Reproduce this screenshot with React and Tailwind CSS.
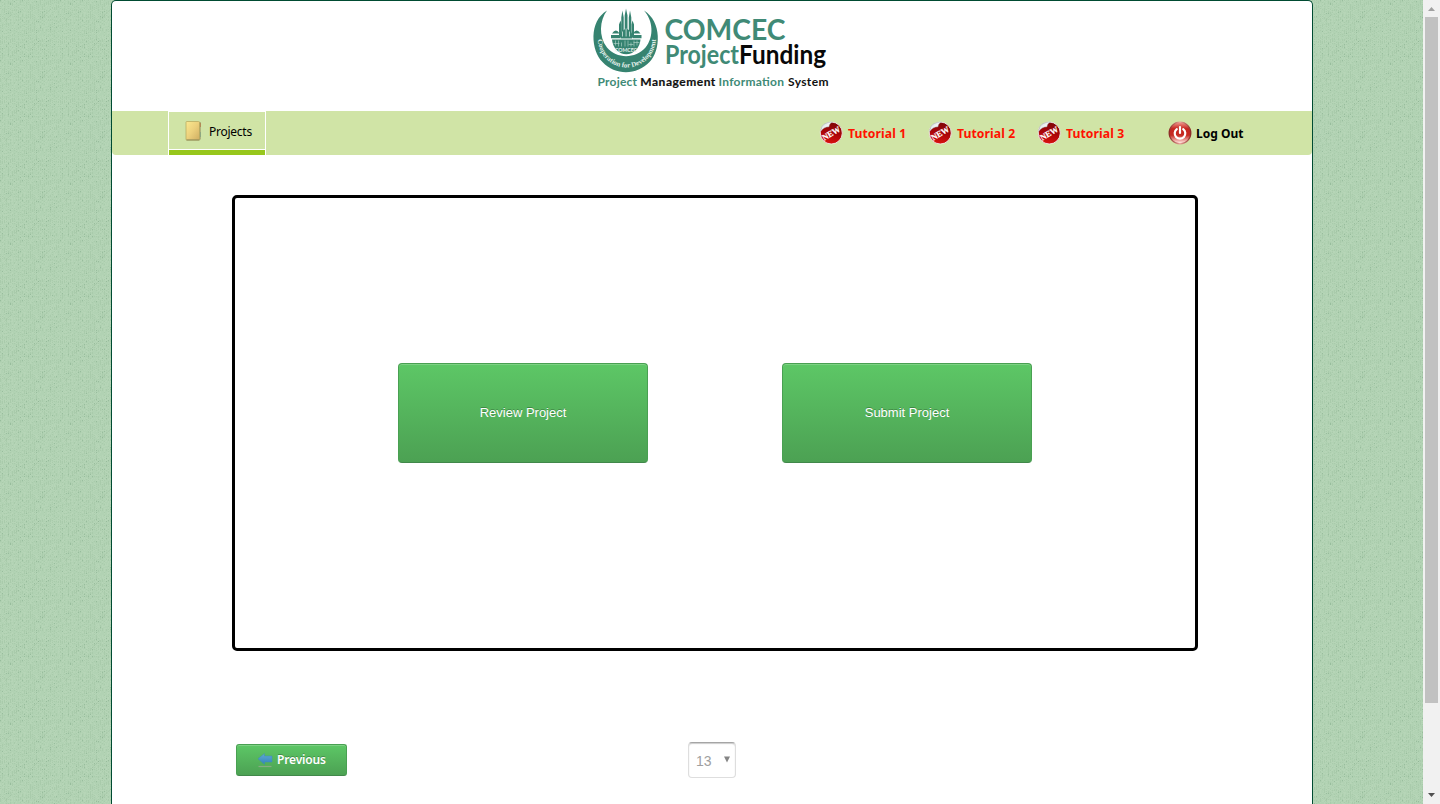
const DARK = [];
const LIGHT = [];
let seed = 17;
const rand = () => {
  seed = (seed * 16807) % 2147483647;
  return seed / 2147483647;
};
for (let y = 0; y < 60; y += 1) {
  for (let x = 0; x < 60; x += 1) {
    const r = rand();
    if (x % 2 === 0 && r < 0.42) DARK.push([x, y, r < 0.03 ? 0.17 : 0.06]);
    else if (r > 0.75) LIGHT.push([x, y]);
  }
}

function Texture() {
  return (
    <svg className="absolute inset-0 h-full w-full" shapeRendering="crispEdges">
      <defs>
        <pattern id="linen" width="60" height="60" patternUnits="userSpaceOnUse">
          <rect width="60" height="60" fill="#b1d2b3" />
          {DARK.map(([x, y, o]) => (
            <rect key={`d${x}-${y}`} x={x} y={y} width="1" height="1" fill="#205030" opacity={o} />
          ))}
          {LIGHT.map(([x, y]) => (
            <rect key={`l${x}-${y}`} x={x} y={y} width="1" height="1" fill="#fff" opacity="0.06" />
          ))}
          <path d="M4 22l8-8M30 50l10-10M42 18l9-9M12 56l6-6" stroke="#205030" strokeOpacity="0.05" />
        </pattern>
      </defs>
      <rect width="100%" height="100%" fill="url(#linen)" />
    </svg>
  );
}

function Logo() {
  return (
    <svg width="250" height="92" viewBox="585 0 250 92" className="block" fontFamily="Lato, sans-serif">
      <defs>
        <path id="motto" d="M597.300 38A29 29 0 0 0 655.300 38" />
        <clipPath id="bowl">
          <path d="M611.500 39H640A14.300 16 0 0 1 611.500 39Z" />
        </clipPath>
      </defs>
      <g transform="translate(0.500 -0.500)">
        <path
          d="M606.500 10C588 21 590.500 50 602 61.500C615 75.500 637 74.500 649 61.500C660.500 50 661.500 21 643.500 10C652.500 20 654 36 645 47C635 58.500 616 58.500 606.500 47C598 36 599 20 606.500 10Z"
          fill="#368370"
        />
        <text fontSize="7" fontWeight="700" fontFamily="Liberation Serif, serif" fill="#e4f1ec">
          <textPath href="#motto" startOffset="1" textLength="89" lengthAdjust="spacingAndGlyphs">
            Cooperation for Development
          </textPath>
        </text>
        <g fill="#368370">
          <path d="M620.800 36V17L621.900 10L623.200 17V36ZM624.200 36V15L625.500 8L627 15V36ZM628.300 36V17L629.500 10L630.800 17V36Z" />
          <path d="M618.500 37V24L620 20L621 24V37ZM631 37V24L632 20L633.500 24V37Z" />
          <path d="M620 33Q625.700 24 631.500 33V38H620Z" />
          <path d="M611.500 33Q615.500 27 619 33ZM632.500 33Q636 27 640 33Z" />
          <path d="M610.500 34.500H619.500V37.800H610.500ZM632 34.500H641V37.800H632Z" />
          <path d="M611.500 39H640A14.300 16 0 0 1 611.500 39Z" />
        </g>
        <g clipPath="url(#bowl)" stroke="#b9d8ce" strokeWidth="0.600" fill="none">
          <path d="M615 40v5M618 40v6M621 42v4M624.500 40v6M627.500 40v6M630.500 42v4M633.500 40v6M636.500 40v5M613 43h6M628 44h5M633 42h6" />
        </g>
        <text x="614.500" y="51.300" fontSize="5.500" fontWeight="700" fill="#e4f1ec" textLength="22" lengthAdjust="spacingAndGlyphs">COMCEC</text>
        <path d="M622 31v5M625.600 28v8M629 31v5" stroke="#d6e9e2" strokeWidth="0.800" />
      </g>
      <text x="664.500" y="39.200" fontSize="28.500" fontWeight="700" fill="#408a76" textLength="121" lengthAdjust="spacingAndGlyphs">COMCEC</text>
      <text x="665" y="62.800" fontSize="26" fontWeight="700" fill="#408a76" textLength="74" lengthAdjust="spacingAndGlyphs">Project</text>
      <text x="739" y="62.800" fontSize="26" fontWeight="700" fill="#080808" textLength="87" lengthAdjust="spacingAndGlyphs">Funding</text>
      <g fontSize="12" fontWeight="700">
        <text x="597.500" y="84.500" fill="#408a76" textLength="39.500">Project</text>
        <text x="640.300" y="84.500" fill="#111" stroke="#111" strokeWidth="0.200" textLength="75">Management</text>
        <text x="718.500" y="84.500" fill="#408a76" textLength="65.500">Information</text>
        <text x="788" y="84.500" fill="#111" textLength="40.500">System</text>
      </g>
    </svg>
  );
}

function FolderIcon() {
  return (
    <svg width="18" height="22" viewBox="0 0 18 22">
      <defs>
        <linearGradient id="folder" x1="0" y1="0" x2="1" y2="1">
          <stop offset="0" stopColor="#fbe98f" />
          <stop offset="0.5" stopColor="#ecd07c" />
          <stop offset="1" stopColor="#cfae62" />
        </linearGradient>
      </defs>
      <path d="M13 2h2.500v17.500H13z" fill="#8c8458" />
      <path d="M15 3v4" stroke="#b5602f" />
      <path d="M15 12v5" stroke="#6f9a83" />
      <rect x="1" y="1.500" width="13.500" height="18.500" rx="0.8" fill="url(#folder)" stroke="#b9ac62" strokeWidth="0.8" />
      <path d="M1.500 20h13" stroke="#8e8958" />
    </svg>
  );
}

function NewIcon() {
  return (
    <svg width="24" height="24" viewBox="0 0 24 24" className="shrink-0 overflow-visible">
      <defs>
        <linearGradient id="sticker" x1="0.6" y1="0" x2="0.4" y2="1">
          <stop offset="0" stopColor="#7d0508" />
          <stop offset="0.5" stopColor="#a90508" />
          <stop offset="1" stopColor="#dc1210" />
        </linearGradient>
        <linearGradient id="peel" x1="0" y1="0" x2="1" y2="1">
          <stop offset="0" stopColor="#c3cdd0" />
          <stop offset="0.6" stopColor="#ffffff" />
          <stop offset="1" stopColor="#aeb9bd" />
        </linearGradient>
      </defs>
      <path d="M3.200 5.500C5.500 3 9 1 12.500 1A11 11 0 1 1 1.300 12C1.200 9.500 1.800 7 3.200 5.500Z" fill="url(#sticker)" stroke="#f2ecec" strokeWidth="0.900" />
      <path d="M1.600 10.500C1.800 8.500 2.500 7 3 5.500L5 3.200C8 1.600 10.500 1 13.500 1C11.300 2 10 3.500 10 5.700C6.500 5.800 3.500 7.500 1.600 10.500Z" fill="url(#peel)" stroke="#a5b0b4" strokeWidth="0.500" />
      <text x="12" y="15.300" fontSize="8.500" fontWeight="700" fontFamily="Liberation Serif, serif" fill="#fff" stroke="#fff" strokeWidth="0.200" textAnchor="middle" textLength="19.500" lengthAdjust="spacingAndGlyphs" transform="rotate(-30 12 12)">NEW</text>
    </svg>
  );
}

function PowerIcon() {
  return (
    <svg width="24" height="24" viewBox="0 0 24 24">
      <defs>
        <linearGradient id="power" x1="0" y1="0" x2="0" y2="1">
          <stop offset="0" stopColor="#f29a90" />
          <stop offset="0.3" stopColor="#c6251f" />
          <stop offset="0.6" stopColor="#c62a22" />
          <stop offset="0.95" stopColor="#ffe0da" />
        </linearGradient>
        <linearGradient id="rim" x1="0" y1="0" x2="1" y2="0">
          <stop offset="0" stopColor="#8c2925" />
          <stop offset="0.5" stopColor="#e9a39a" />
          <stop offset="1" stopColor="#8c2925" />
        </linearGradient>
      </defs>
      <circle cx="12" cy="12" r="10.800" fill="url(#power)" stroke="url(#rim)" strokeWidth="1.300" />
      <path d="M8.800 8.200A5.300 5.300 0 1 0 15.200 8.200M12 6.200V12" fill="none" stroke="#fff" strokeWidth="2.200" strokeLinecap="round" />
    </svg>
  );
}

function ArrowIcon() {
  return (
    <svg width="16" height="16" viewBox="0 0 16 16">
      <defs>
        <linearGradient id="arrow" x1="0" y1="0" x2="0" y2="1">
          <stop offset="0" stopColor="#62a9d2" />
          <stop offset="1" stopColor="#3285bd" />
        </linearGradient>
      </defs>
      <path d="M1 6.800L7.500 1.500V4H15V10H7.500V12.300Z" fill="url(#arrow)" stroke="#3d8cb8" strokeWidth="0.500" />
      <path d="M1.500 14.500H14.500" stroke="#86ab82" strokeWidth="1.200" />
    </svg>
  );
}

const GREEN =
  "border border-[#49a052] border-b-[#41884a] bg-linear-to-b from-[#5dc766] to-[#4ca153] text-white shadow-[inset_0_1px_0_rgba(255,255,255,0.2)] [text-shadow:0_-1px_0_rgba(0,0,0,0.25)]";

function Tutorial({ n }) {
  return (
    <a className="flex w-[109px] items-center gap-[5px] text-[#ff1200]">
      <NewIcon />
      <span className="pt-[2px] tracking-[0.080px] whitespace-nowrap [font-size:12.200px]">Tutorial {n}</span>
    </a>
  );
}

export default function App() {
  return (
    <div className="flex h-[804px] w-[1440px] overflow-hidden bg-[#b2d3b4] font-['Noto_Sans',sans-serif]">
      <div className="relative flex w-[1423px] pl-[111px]">
        <Texture />
        <main className="relative flex w-[1202px] flex-col rounded-t-[5px] border border-b-0 border-[#004b32] bg-white">
          <header className="h-[110px] pl-[473px]">
            <Logo />
          </header>
          <nav className="flex h-[44px] shrink-0 rounded-b-[4px] bg-[#d0e4a6] pl-[56px] text-[12px] font-bold">
            <a className="flex w-[98px] flex-col border-x border-t border-white font-normal">
              <span className="flex h-[37px] items-center gap-[6px] pl-[16px] text-[12px] text-black">
                <FolderIcon />
                <span className="pt-[3px] tracking-[-0.250px]">Projects</span>
              </span>
              <span className="h-[6px] border-t border-white bg-[#97c71c]" />
            </a>
            <div className="ml-[553px] flex items-center">
              <Tutorial n={1} />
              <Tutorial n={2} />
              <Tutorial n={3} />
            </div>
            <a className="ml-[22px] flex items-center gap-[4px] text-black">
              <PowerIcon />
              <span className="pt-[2px] whitespace-nowrap">Log Out</span>
            </a>
          </nav>
          <section className="mt-[40px] ml-[120px] flex h-[456px] w-[966px] shrink-0 gap-[134px] rounded-[5px] border-[3px] border-black pt-[165px] pl-[163px] font-['Liberation_Sans',sans-serif]">
            <button className={`h-[100px] w-[250px] rounded-[4px] pb-[1px] text-[13px] ${GREEN}`}>Review Project</button>
            <button className={`h-[100px] w-[250px] rounded-[4px] pb-[1px] text-[13px] ${GREEN}`}>Submit Project</button>
          </section>
          <footer className="mt-[91px] ml-[124px] flex items-start gap-[341px]">
            <button className={`mt-[2px] flex h-[32px] w-[111px] items-center gap-[4px] rounded-[3px] pl-[20px] text-[12px] font-semibold ${GREEN}`}>
              <ArrowIcon />
              <span className="tracking-[-0.150px]">Previous</span>
            </button>
            <div className="flex h-[36px] w-[48px] items-center justify-between rounded-[4px] border border-[#dedede] border-t-[#a5a5a5] pr-[4px] pl-[7px] font-['Liberation_Sans',sans-serif] text-[14px] text-[#a0a0a0] shadow-[inset_0_1px_1px_#ccc]">
              <span className="pt-[2px]">13</span>
              <svg width="8" height="8" viewBox="0 0 8 8"><path d="M1 0.500H7L4 6.500Z" fill="#858585" /></svg>
            </div>
          </footer>
        </main>
      </div>
      <aside className="flex w-[17px] flex-col items-center bg-[#f1f1f1]">
        <svg width="17" height="17" viewBox="0 0 17 17"><path d="M5 11L8.500 7L12 11Z" fill="#a0a0a0" /></svg>
        <div className="h-[686px] w-[13px] bg-[#c1c1c1]" />
        <svg width="17" height="17" viewBox="0 0 17 17" className="mt-auto"><path d="M5 6L8.500 10L12 6Z" fill="#505050" /></svg>
      </aside>
    </div>
  );
}
